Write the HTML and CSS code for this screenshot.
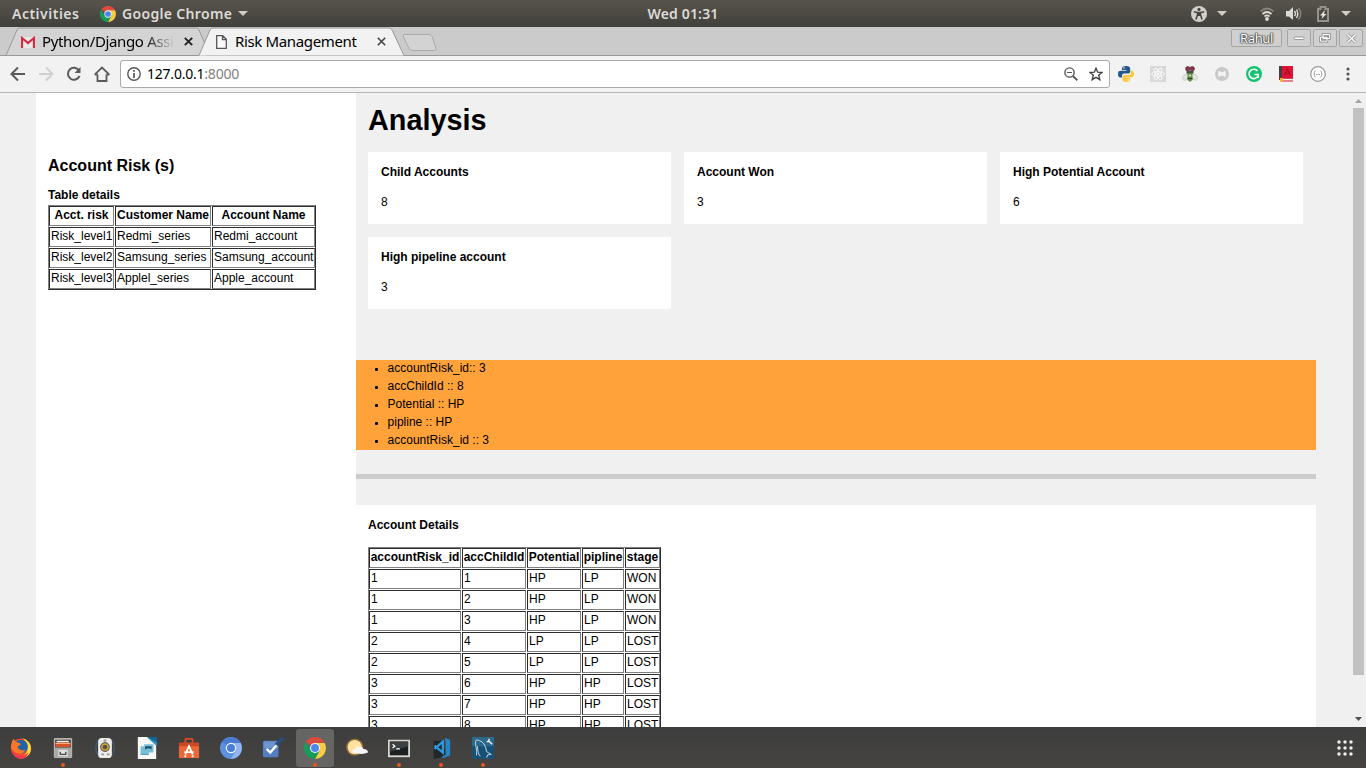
FILE: index.html
```html
<!DOCTYPE html>
<html lang="en">
<head>
<meta charset="utf-8">
<title>Risk Management</title>
<link rel="stylesheet" href="styles.css">
</head>
<body>
<svg class="defs" width="0" height="0">
  <symbol id="chrome" viewBox="0 0 24 24">
    <path fill="#dd4b3e" d="M12 12 2 5.400A12 12 0 0 1 22.500 6L12 6.500z"/>
    <path fill="#f9cc45" d="M12 6.500H22.600A12 12 0 0 1 12 24L17 14z"/>
    <path fill="#179b58" d="M1.900 5.500A12 12 0 0 0 12 24L17 15 12 12 7 14z"/>
    <circle cx="12" cy="12" r="5.500" fill="#f5f5f5"/><circle cx="12" cy="12" r="4.300" fill="#4b87ec"/>
  </symbol>
</svg>
<header class="topbar">
  <span class="activities">Activities</span>
  <svg class="top-chrome" width="16" height="16"><use href="#chrome"/></svg>
  <span class="appname">Google Chrome</span>
  <svg class="caret" width="10" height="6"><path d="M0 0h10L5 5z" fill="#d0cec9"/></svg>
  <span class="clock">Wed 01:31</span>
  <div class="status">
    <svg width="16" height="16" viewBox="0 0 16 16"><circle cx="8" cy="8" r="8" fill="#d2d0cb"/><circle cx="8" cy="3.400" r="1.600" fill="#45433e"/><path d="M2.800 5.800 6.500 6.500 6.400 9 5 13.500M13.200 5.800 9.500 6.500 9.600 9 11 13.500" stroke="#45433e" stroke-width="1.500" fill="none"/><path d="M6 5.800h4V10H6z" fill="#45433e"/></svg>
    <svg class="caret-a" width="10" height="6"><path d="M0 0h10L5 5z" fill="#d0cec9"/></svg>
    <svg class="wifi" width="16" height="14" viewBox="0 0 16 14" fill="none"><path d="M1.500 4.500Q8-1.500 14.500 4.500" stroke="#88857e" stroke-width="1.700"/><path d="M3.500 7Q8 3 12.500 7M5.500 9.500Q8 7.300 10.500 9.500" stroke="#dddbd6" stroke-width="1.800"/><circle cx="8" cy="12" r="1.900" fill="#dddbd6"/></svg>
    <svg class="volume" width="16" height="14" viewBox="0 0 16 14" fill="none"><path d="M0 4h3l4-4v13L3 9.500H0z" fill="#dddbd6"/><path d="M8.500 4Q10.500 6.500 8.500 9M10.500 2.500Q13 6.500 10.500 11" stroke="#dddbd6" stroke-width="1.400"/><path d="M12.500 1Q17 6.500 12.500 12.500" stroke="#88857e" stroke-width="1.400"/></svg>
    <svg class="battery" width="12" height="16" viewBox="0 0 12 16"><path d="M1 3h2.500V1h5v2H11v12H1z" stroke="#96938c" stroke-width="2" fill="none"/><path d="M8 4 3 9.500h2.500L4.500 13 9.500 8H7z" fill="#e5e3de"/></svg>
    <svg class="caret-b" width="10" height="6"><path d="M0 0h10L5 5z" fill="#d0cec9"/></svg>
  </div>
</header>

<div class="tabstrip">
  <svg class="tab-shapes" width="450" height="29" viewBox="0 0 450 29">
    <path d="M6 28.500 17 3Q18 1 20 1H196Q198 1 199 3L206 18V28.500z" fill="#d4d4d4"/>
    <path d="M6 28.500 17 3Q18 1 20 1H196Q198 1 199 3L205 17" fill="none" stroke="#999"/>
    <path d="M0 28.500H199L210 3Q211 1 213 1H389Q391 1 392 3L404 28.500H450" fill="#f2f2f2" stroke="#999"/>
    <path d="M404 28.500H450V29H404z" fill="#cbcbcb"/>
    <path d="M0 28.500H199M404 28.500H450" stroke="#999"/>
    <path d="M404 7.500h25q2 0 3 2l4 11.500q1 2.500-1 2.500h-23q-2 0-3-2l-5.500-11.500q-1-2.500.5-2.500z" fill="#d3d3d3" stroke="#aaa"/>
  </svg>
  <div class="tab tab-mail">
    <svg width="14" height="12" viewBox="0 0 14 12"><path d="M0 1h14v11H0z" fill="#e8e8e8"/><path d="M1 12V2l6 5 6-5v10" fill="none" stroke="#d52c42" stroke-width="2.200"/></svg>
    <span class="tab-title faded">Python/Django Assi</span>
    <svg class="close" width="9" height="9"><path d="M.8.8l7.400 7.400M8.200.8.800 8.200" stroke="#222" stroke-width="1.900"/></svg>
  </div>
  <div class="tab tab-risk">
    <svg width="11" height="14" viewBox="0 0 11 14"><path d="M.7.700h6l3.600 3.600v9H.7zM6.500.700v4h4" fill="#fafafa" stroke="#555" stroke-width="1.300"/></svg>
    <span class="tab-title">Risk Management</span>
    <svg class="close" width="9" height="9"><path d="M.8.8l7.400 7.400M8.200.8.800 8.200" stroke="#444" stroke-width="1.600"/></svg>
  </div>
  <div class="window-buttons">
    <span class="wbtn user">Rahul</span>
    <span class="wbtn"><svg width="12" height="6"><rect x="1" y="2" width="10" height="2.500" rx="1" fill="#fff" stroke="#888" stroke-width=".8"/></svg></span>
    <span class="wbtn"><svg width="12" height="10" viewBox="0 0 12 10" fill="none"><path d="M4 1.500h6.500v4H4zM1.500 4.200H8v4H1.500z" stroke="#8a8a8a" stroke-width="2.400"/><path d="M4 1.500h6.500v4H4zM1.500 4.200H8v4H1.500z" stroke="#fff"/></svg></span>
    <span class="wbtn"><svg width="11" height="11"><path d="M1.500 1.500l8 8M9.500 1.500l-8 8" stroke="#888" stroke-width="3"/><path d="M1.500 1.500l8 8M9.500 1.500l-8 8" stroke="#fff" stroke-width="1.600"/></svg></span>
  </div>
</div>

<div class="toolbar">
  <svg class="nav" width="108" height="20" viewBox="0 0 108 20" fill="none" stroke="#5a5a5a" stroke-width="2">
    <path d="M18 10H5M11 3.500 4.500 10 11 16.500" transform="translate(7)"/>
    <path d="M39 10h13M46 3.500 52.500 10 46 16.500" stroke="#d0d0d0"/>
    <path d="M79 6.500A6 6 0 1 0 79.500 12"/><path d="M80.500 3v6h-6z" fill="#5a5a5a" stroke="none"/>
    <path d="M97.500 10.500V17h9v-6.500M94.700 10.500h2.800M106.500 10.500h2.800M94.700 10.700 102 3.500 109.300 10.700" stroke-width="1.800"/>
  </svg>
  <div class="address">
    <svg width="14" height="14" viewBox="0 0 14 14"><circle cx="7" cy="7" r="6.200" fill="none" stroke="#555" stroke-width="1.400"/><path d="M7 3v1.700M7 6v5" stroke="#555" stroke-width="1.700"/></svg>
    <span class="url">127.0.0.1<span class="port">:8000</span></span>
    <svg class="magnify" width="14" height="14" viewBox="0 0 14 14" fill="none" stroke="#555"><circle cx="5.500" cy="5.500" r="4.600" stroke-width="1.400"/><path d="M3 5.500h5"/><path d="M9 9l4.300 4.300" stroke-width="1.900"/></svg>
    <svg width="14" height="14" viewBox="0 0 14 14"><path d="M7 1.200 8.700 5.200 13 5.500 9.700 8.300 10.800 12.700 7 10.400 3.200 12.700 4.300 8.300 1 5.500 5.300 5.200z" fill="none" stroke="#444" stroke-width="1.400"/></svg>
  </div>
  <div class="extensions">
    <svg viewBox="0 0 16 16"><path d="M8 0C5 0 4 1 4 2.500V4h4.500v.8H2.500C.8 4.800 0 6 0 8s.8 3.500 2.300 3.500H4V9.500C4 8 5 7.400 6.500 7.400h4c1 0 1.700-.8 1.700-1.800v-3C12.200 1 11 0 8 0z" fill="#25568c"/><path d="M8.300 16c3 0 4-1 4-2.500V12H7.800v-.8h6c1.700 0 2.200-1.400 2.200-3.200s-.8-3.500-2.300-3.500h-.8V7c0 1.200-1 2-2.200 2h-4C5.500 9 4.500 9.500 4.500 11v2.500C4.500 15 5.500 16 8.300 16z" fill="#ffc83d"/><circle cx="6" cy="2" r=".8" fill="#fff"/><circle cx="10.300" cy="14" r=".8" fill="#fff"/></svg>
    <svg viewBox="0 0 16 16"><path d="M0 0h16v16H0z" fill="#d9d9d9"/><g fill="none" stroke="#fff" stroke-width=".8"><ellipse cx="8" cy="8" rx="6.500" ry="2.400"/><ellipse cx="8" cy="8" rx="6.500" ry="2.400" transform="rotate(60 8 8)"/><ellipse cx="8" cy="8" rx="6.500" ry="2.400" transform="rotate(120 8 8)"/></g><circle cx="8" cy="8" r="1.200" fill="#fff"/></svg>
    <svg viewBox="0 0 16 16"><path d="M7 7 2 9Q-1.500 12 2 14.500 5 15 7 10zM9 7l5 2q3.500 3 0 5.500Q11 15 9 10z" fill="#e1e5df" stroke="#b6c4b5" stroke-width=".6"/><path d="M5.500 6h5v8L8 16l-2.500-2z" fill="#65974a"/><path d="M5.500 12.500h5" stroke="#304232" stroke-width="1.400"/><path d="M4.500 5h7v2.500h-7z" fill="#485347"/><circle cx="8" cy="9.500" r="1.100" fill="#dde7ad"/><circle cx="5.800" cy="2.800" r="2.300" fill="#8b3149" stroke="#53434a" stroke-width=".7"/><circle cx="10.200" cy="2.800" r="2.300" fill="#8b3149" stroke="#53434a" stroke-width=".7"/></svg>
    <svg viewBox="0 0 16 16"><circle cx="8" cy="8" r="7" fill="#c9c9c9"/><path d="M4.300 4.500 8 6.500l3.700-2v6.500L8 9.500 4.300 11z" fill="#f4f4f4"/></svg>
    <svg viewBox="0 0 16 16"><circle cx="8" cy="8" r="8" fill="#13c36f"/><path d="M11.500 5A4.700 4.700 0 1 0 12 10M8.500 8.500h3.800v3.500" fill="none" stroke="#fff" stroke-width="1.600"/></svg>
    <svg viewBox="0 0 16 16"><path d="M1 0h3v14H1z" fill="#4b3b42"/><path d="M4 0h11v12H4z" fill="#df1435"/><path d="M2 13h13v2H2z" fill="#eee"/><path d="M1 12.300h14M3 15h12" stroke="#d51431"/><path d="M6.500 9.500 9.500 3l3 6.500M7.500 7.500h4" fill="none" stroke="#b20c2b" stroke-width="1.300"/><path d="M2 12h3v4l-1.500-1L2 16z" fill="#f2b42c"/></svg>
    <svg viewBox="0 0 16 16"><circle cx="8" cy="8" r="7.300" fill="#fff" stroke="#999" stroke-width="1.200"/><path d="M5.500 5Q4.300 5 4.500 6.500L4 8l.5 1.500Q4.300 11 5.500 11M10.500 5q1.200 0 1 1.500L12 8l-.5 1.500q.2 1.500-1 1.500" fill="none" stroke="#999"/><path d="M6 8.500h4" stroke="#999" stroke-dasharray="1 .5"/></svg>
  </div>
  <svg class="menu" width="4" height="14" fill="#555"><circle cx="2" cy="2" r="1.600"/><circle cx="2" cy="7" r="1.600"/><circle cx="2" cy="12" r="1.600"/></svg>
</div>

<div class="viewport">
  <aside class="sidebar">
    <h2>Account Risk (s)</h2>
    <h3>Table details</h3>
    <div class="grid risk-grid">
      <b>Acct. risk</b><b>Customer Name</b><b>Account Name</b>
      <span>Risk_level1</span><span>Redmi_series</span><span>Redmi_account</span>
      <span>Risk_level2</span><span>Samsung_series</span><span>Samsung_account</span>
      <span>Risk_level3</span><span>Applel_series</span><span>Apple_account</span>
    </div>
  </aside>
  <main class="main">
    <h1>Analysis</h1>
    <section class="cards">
      <div class="card"><h3>Child Accounts</h3><p>8</p></div>
      <div class="card"><h3>Account Won</h3><p>3</p></div>
      <div class="card"><h3>High Potential Account</h3><p>6</p></div>
      <div class="card"><h3>High pipeline account</h3><p>3</p></div>
    </section>
    <ul class="summary">
      <li>accountRisk_id:: 3</li><li>accChildId :: 8</li><li>Potential :: HP</li><li>pipline :: HP</li><li>accountRisk_id :: 3</li>
    </ul>
    <div class="rule"></div>
    <section class="details">
      <h3>Account Details</h3>
      <div class="grid detail-grid">
        <b>accountRisk_id</b><b>accChildId</b><b>Potential</b><b>pipline</b><b>stage</b>
        <span>1</span><span>1</span><span>HP</span><span>LP</span><span>WON</span>
        <span>1</span><span>2</span><span>HP</span><span>LP</span><span>WON</span>
        <span>1</span><span>3</span><span>HP</span><span>LP</span><span>WON</span>
        <span>2</span><span>4</span><span>LP</span><span>LP</span><span>LOST</span>
        <span>2</span><span>5</span><span>LP</span><span>LP</span><span>LOST</span>
        <span>3</span><span>6</span><span>HP</span><span>HP</span><span>LOST</span>
        <span>3</span><span>7</span><span>HP</span><span>HP</span><span>LOST</span>
        <span>3</span><span>8</span><span>HP</span><span>HP</span><span>LOST</span>
      </div>
    </section>
  </main>
  <div class="scrollbar">
    <svg width="7" height="4"><path d="M0 4h7L3.500 0z" fill="#a3a3a3"/></svg>
    <div class="thumb"></div>
    <svg class="down" width="7" height="4"><path d="M0 0h7L3.500 4z" fill="#505050"/></svg>
  </div>
</div>

<footer class="dock">
  <div class="app"><svg viewBox="0 0 24 24"><circle cx="12" cy="12.500" r="11" fill="#f24b2a"/><path d="M14 1q9 4 9 12a11 11 0 0 1-14 10q8-2 10-9 0-7-5-13z" fill="#ffd83c"/><circle cx="12" cy="10.500" r="7.500" fill="#2462a8"/><path d="M1 10Q2 4 4 2q1 3 4 4 3 0 4 2l-4 3q3 5 9 3-3 6-9 4-6-2-7-8z" fill="#f97827"/><path d="M2 13q4 7 11 7 5 0 7-4-1 8-9 8-8-2-9-11z" fill="#f0394d"/></svg></div>
  <div class="app running"><svg viewBox="0 0 24 24"><rect x="2" y="1" width="20" height="22" rx="1.500" fill="#b7b5b2"/><path d="M3.500 3h17v9h-17z" fill="#423b38"/><path d="M5 4h13l1 2H5z" fill="#eee"/><path d="M4 6h16v5H4z" fill="#d65427"/><path d="M4 7h16" stroke="#ffc294"/><path d="M3 11.500h18V22H3z" fill="#aaa9a6"/><path d="M7 14h10v7H7z" fill="#e4e4e2"/><path d="M9 16v3h6v-3" fill="none" stroke="#474747" stroke-width="1.500"/></svg></div>
  <div class="app"><svg viewBox="0 0 24 24"><path d="M4 4Q0 12 4 20M20 4q4 8 0 16" fill="none" stroke="#455f7a" stroke-width="1.200"/><rect x="4.500" y="1" width="15" height="22" rx="4" fill="#ededeb"/><circle cx="12" cy="4" r="1.700" fill="#aaa"/><circle cx="12" cy="11" r="5.300" fill="#555148"/><circle cx="12" cy="11" r="3.400" fill="none" stroke="#d1a737" stroke-width="1.600"/><path d="M8 19h3M14 19h3" stroke="#999" stroke-width="2"/></svg></div>
  <div class="app"><svg viewBox="0 0 24 24"><path d="M2 0h12l8 8v16H2z" fill="#f7f7f5"/><path d="M12 0h11v10z" fill="#126798"/><path d="m12 0 11 10v-4z" fill="#3692bd"/><path d="M5 10h9v9H5zM9 8h10v9H9z" fill="#79bed4"/><path d="M10 14V10h7v4l-2-2-1 1-1-1z" fill="#17526c"/><path d="M5 19h9" stroke="#399dbb"/></svg></div>
  <div class="app"><svg viewBox="0 0 24 24"><path d="M8 7V3q0-1 1-1h6q1 0 1 1v4" fill="none" stroke="#d84b24" stroke-width="2"/><path d="M1 6h22v5H1z" fill="#ca4822"/><path d="M1 10h22v13H1z" fill="#ec6736"/><path d="m8 19 4-9 4 9M7 16.500h10M7 21h2M15 21h2" fill="none" stroke="#fff" stroke-width="2"/></svg></div>
  <div class="app"><svg viewBox="0 0 24 24"><circle cx="12" cy="12" r="12" fill="#5b91df"/><path d="M12 12 2 5.400A12 12 0 0 1 22.500 6.500H12z" fill="#4a7bd0"/><path d="M12 6.500h10.500A12 12 0 0 1 12 24l5-9z" fill="#91b6ef"/><circle cx="12" cy="12" r="5.700" fill="#eef4ff"/><circle cx="12" cy="12" r="4.400" fill="#4a7ed5"/></svg></div>
  <div class="app"><svg viewBox="0 0 24 24"><rect x="1" y="4" width="17" height="18" rx="1.500" fill="#537fc0"/><path d="M2 5h15v7H2z" fill="#6d96ce"/><path d="M15 9 23 1" stroke="#294c82" stroke-width="4"/><path d="m5 13 4 4 7-8" fill="none" stroke="#fff" stroke-width="2.600"/></svg></div>
  <div class="app running active"><svg><use href="#chrome"/></svg></div>
  <div class="app"><svg viewBox="0 0 24 24"><circle cx="9.500" cy="11" r="9.500" fill="#d99836" opacity=".5"/><circle cx="9.500" cy="11" r="7.800" fill="#ffe2a0"/><path d="M7 17q-1-4 3-4 1-4 5-2 3-1 4 2 5 0 5 4-6 3-17 0z" fill="#f5f5f3"/></svg></div>
  <div class="app running"><svg viewBox="0 0 24 24"><path d="M0 3h24v19H0z" fill="#d7d7d5"/><path d="M2 5h20v15H2z" fill="#1d2021"/><path d="M2 5h20v5L2 16z" fill="#3d3f40"/><path d="m5 8 2.500 2L5 12M9 13h4" fill="none" stroke="#fff" stroke-width="1.400"/></svg></div>
  <div class="app running"><svg viewBox="0 0 24 24"><path d="M4 4h9l5 17-14 3z" fill="#22272a"/><path d="m16 1 6 2v17l-7 3-3-1 5-3V6z" fill="#2486c5"/><path d="M5 9.500 14 17V5L5 13" fill="none" stroke="#2d9be0" stroke-width="2.400"/></svg></div>
  <div class="app running"><svg viewBox="0 0 24 24"><rect width="24" height="24" rx="2" fill="#195175"/><path d="M0 0h24v10H0z" fill="#2b6889"/><path d="M5 20C6 15 3 8 4 4q1-2 4 0 6 1 8 12l5 3-4 .5-1 3M6 10q0 8 3 11" fill="none" stroke="#c8e2ec"/><path d="m18 4 4 4M19 2l-1 3-2 0" stroke="#eee" stroke-width="1.600" fill="none"/></svg></div>
  <svg class="grid-icon" width="16" height="16" viewBox="0 0 16 16" fill="#eee"><circle cx="2" cy="2" r="1.700"/><circle cx="8" cy="2" r="1.700"/><circle cx="14" cy="2" r="1.700"/><circle cx="2" cy="8" r="1.700"/><circle cx="8" cy="8" r="1.700"/><circle cx="14" cy="8" r="1.700"/><circle cx="2" cy="14" r="1.700"/><circle cx="8" cy="14" r="1.700"/><circle cx="14" cy="14" r="1.700"/></svg>
</footer>
</body>
</html>
```
FILE: styles.css
```css
* { box-sizing: border-box; }
body { margin: 0; width: 1366px; height: 768px; overflow: hidden; display: flex; flex-direction: column; font: 12px/18px "Liberation Sans", Arial, sans-serif; color: #000; }
h1, h2, h3, p, ul { margin: 0; padding: 0; }
h3 { font-size: 12px; line-height: 18px; }
svg { display: block; flex: none; }
.defs { position: absolute; }

.topbar { position: relative; height: 27px; flex: none; display: flex; align-items: center; background: linear-gradient(#58544d, #41403b); color: #dddbd6; font: 600 14px/27px "Noto Sans", sans-serif; padding-left: 12px; white-space: nowrap; }
.activities { width: 88px; letter-spacing: .5px; }
.top-chrome { margin-right: 6px; }
.appname { width: 116px; letter-spacing: .33px; }
.clock { position: absolute; left: 0; right: 0; text-align: center; letter-spacing: .15px; }
.status { margin-left: auto; display: flex; align-items: center; padding-right: 15px; }
.caret-a { margin: 0 32px 0 10px; }
.wifi { margin-right: 11px; }
.volume { margin-right: 15px; }
.battery { margin-right: 12px; }

.tabstrip { position: relative; height: 29px; flex: none; display: flex; background: #cbcbcb; border-bottom: 1px solid #999; font: 15px/29px "Noto Sans", sans-serif; }
.tab-shapes { position: absolute; left: 0; top: 0; }
.tab { position: relative; display: flex; align-items: center; height: 29px; white-space: nowrap; }
.tab-mail { padding-left: 21px; width: 215px; }
.tab-risk { width: 190px; padding-left: 1px; }
.tab-title { margin-left: 7px; width: 134px; overflow: hidden; letter-spacing: -.35px; }
.tab-risk .tab-title { margin-left: 8px; }
.close { margin-left: 8px; }
.faded { -webkit-mask-image: linear-gradient(90deg, #000 76%, transparent 99%); mask-image: linear-gradient(90deg, #000 76%, transparent 99%); }
.window-buttons { position: relative; margin-left: auto; display: flex; gap: 2px; padding: 2px 3px 0 0; }
.wbtn { width: 24px; height: 18px; border: 1px solid #a5a5a5; border-radius: 2px; background: #d0d0d0; display: flex; align-items: center; justify-content: center; }
.user { width: 51px; margin-right: 3px; font: 13px/16px "Noto Sans", sans-serif; letter-spacing: -.4px; color: #fff; text-shadow: 0 0 1px #333, 0 0 1px #333, 0 0 2px #444, 0 0 2px #444; }

.toolbar { height: 37px; flex: none; display: flex; align-items: center; background: #f2f2f2; border-bottom: 1px solid #b5b5b5; }
.nav { margin-right: 12px; overflow: visible; }
.address { width: 990px; height: 28px; border: 1px solid #a9a9a9; border-radius: 3px; background: #fff; display: flex; align-items: center; padding: 0 6px; }
.url { margin-left: 6px; font: 14px/26px "Noto Sans", sans-serif; letter-spacing: -.22px; }
.port { color: #808080; }
.magnify { margin-left: auto; margin-right: 11px; }
.extensions { display: flex; gap: 16px; margin-left: 8px; }
.extensions svg { width: 16px; height: 16px; }
.menu { margin-left: 20px; }

.viewport { height: 634px; flex: none; display: flex; overflow: hidden; background: #f0f0f0; padding-left: 36px; }
.sidebar { width: 320px; background: #fff; padding: 61px 12px 0; }
.sidebar h2 { font-size: 16px; line-height: 24px; }
.sidebar h3 { margin-top: 8px; height: 19px; }
.grid { display: inline-grid; gap: 1px; border: 1px solid; border-color: #808080 #2c2c2c #2c2c2c #808080; grid-auto-rows: 20px; }
.grid > * { border: 1px solid; border-color: #2c2c2c #808080 #808080 #2c2c2c; padding-left: 1px; line-height: 16px; white-space: nowrap; }
.grid > b { text-align: center; padding: 0; }
.risk-grid { grid-template-columns: 65px 96px 103px; }
.detail-grid { grid-template-columns: 92px 64px 54px 42px 35px; }
.main { width: 960px; }
.main h1 { font-size: 28.800px; line-height: 44px; padding: 5px 12px 0; height: 59px; }
.cards { display: grid; grid-template-columns: repeat(3, 303px); gap: 13px; padding-left: 12px; }
.card { height: 72px; background: #fff; padding: 11px 13px; }
.card p { margin-top: 12px; }
.summary { margin-top: 51px; background: #ffa23a; padding-left: 19px; height: 90px; list-style: none; }
.summary li { display: flex; align-items: center; height: 18px; line-height: 16px; padding-bottom: 2px; white-space: pre; }
.summary li::before { content: ""; width: 3px; height: 3px; margin: 2px 9.600px 0 0; border-radius: 1px; background: #000; }
.rule { margin-top: 24px; height: 5px; background: #ccc; }
.details { margin-top: 26px; height: 240px; background: #fff; padding: 11px 12px; }
.details h3 { margin-bottom: 13px; }
.scrollbar { width: 13px; margin-left: auto; display: flex; flex-direction: column; align-items: center; padding: 6px 2px 6px 0; }
.thumb { width: 11px; height: 567px; background: #c1c1c1; margin-top: 5px; }
.down { margin-top: auto; }

.dock { height: 41px; flex: none; display: flex; align-items: center; background: linear-gradient(#3d3d3d, #454441); padding-left: 2px; gap: 4px; }
.app { position: relative; width: 38px; height: 38px; display: flex; align-items: center; justify-content: center; border-radius: 3px; }
.app svg { width: 22px; height: 22px; }
.active { background: #656563; }
.running::after { content: ""; position: absolute; left: 17px; bottom: 0; width: 4px; height: 4px; border-radius: 50%; background: #e95420; }
.grid-icon { margin-left: auto; margin-right: 13px; }
```
